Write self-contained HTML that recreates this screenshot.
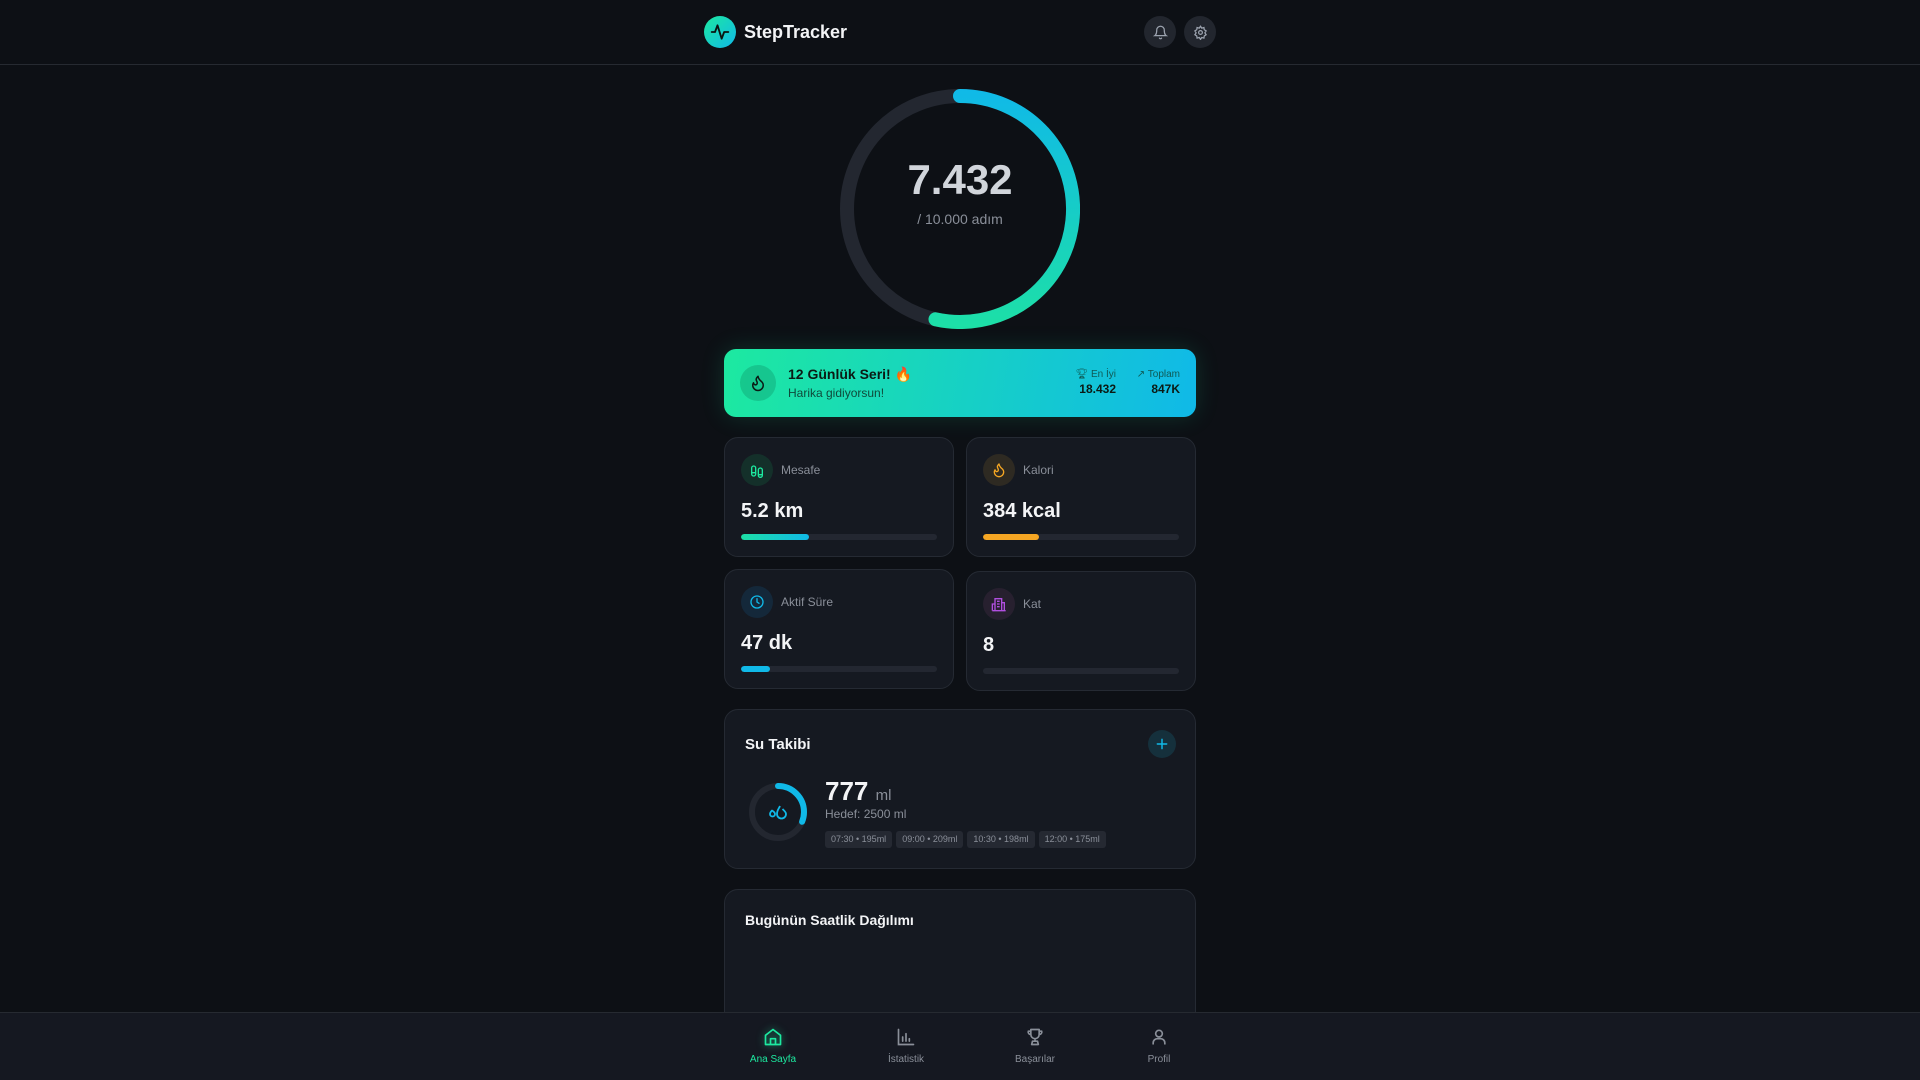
<!DOCTYPE html>
<html style="overflow:hidden;height:1080px"><head><meta charset="utf-8"><style>
*{margin:0;padding:0;box-sizing:border-box}
body{width:1920px;height:1080px;background:#0d1015;font-family:"Liberation Sans",sans-serif;position:relative;overflow:hidden;color:#f3f4f6}
.abs{position:absolute}
.hdr{left:0;top:0;width:1920px;height:65px;border-bottom:1px solid #262a31}
.card{position:absolute;background:#151921;border:1px solid #252a33;border-radius:14px}
.ic{position:absolute;width:32px;height:32px;border-radius:50%;display:flex;align-items:center;justify-content:center}
.lbl{position:absolute;font-size:12px;color:#8a8f99}
.val{position:absolute;font-size:20px;font-weight:bold;color:#f3f4f6}
.bar{position:absolute;left:16px;width:196px;height:6px;border-radius:3px;background:#232731;overflow:hidden}
.bar i{display:block;height:6px;border-radius:3px}
.chip{display:inline-block;height:17px;line-height:17px;padding:0 6px;margin-right:4px;background:#252932;border-radius:3px;font-size:9px;color:#8a8f99}
.nav{left:0;top:1012px;width:1920px;height:68px;background:#151821;border-top:1px solid #262a31}
.ni{position:absolute;top:14px;width:80px;margin-left:-40px;text-align:center;font-size:10px;color:#8a8f99}
.ni svg{display:block;margin:0 auto 7px}
</style></head><body>
<div class="abs hdr">
  <div class="abs" style="left:704px;top:16px;width:32px;height:32px;border-radius:50%;background:linear-gradient(135deg,#1de9a0,#10b9e8);display:flex;align-items:center;justify-content:center">
    <svg width="20" height="20" viewBox="0 0 24 24" fill="none" stroke="#0b1410" stroke-width="2.2" stroke-linecap="round" stroke-linejoin="round"><path d="M2 12h4l3-8 5 16 3-8h5"/></svg>
  </div>
  <div class="abs" style="left:744px;top:22px;font-size:18px;font-weight:bold;color:#f3f4f6">StepTracker</div>
  <div class="abs" style="left:1144px;top:16px;width:32px;height:32px;border-radius:50%;background:#22262e;display:flex;align-items:center;justify-content:center">
    <svg width="15" height="15" viewBox="0 0 24 24" fill="none" stroke="#9ca3af" stroke-width="2" stroke-linecap="round"><path d="M6 8a6 6 0 0 1 12 0c0 7 3 9 3 9H3s3-2 3-9"/><path d="M10.3 21a1.9 1.9 0 0 0 3.4 0"/></svg>
  </div>
  <div class="abs" style="left:1184px;top:16px;width:32px;height:32px;border-radius:50%;background:#22262e;display:flex;align-items:center;justify-content:center">
    <svg width="15" height="15" viewBox="0 0 24 24" fill="none" stroke="#9ca3af" stroke-width="2"><circle cx="12" cy="12" r="3"/><path d="M12 2l2 3 3.5-1 .5 3.5 3 2-2 3 2 3-3 2-.5 3.5-3.5-1-2 3-2-3-3.5 1-.5-3.5-3-2 2-3-2-3 3-2 .5-3.5 3.5 1z"/></svg>
  </div>
</div>

<svg class="abs" style="left:840px;top:89px" width="240" height="240" viewBox="0 0 240 240">
  <defs><linearGradient id="g1" gradientUnits="userSpaceOnUse" x1="0" y1="0" x2="0" y2="240"><stop offset="0" stop-color="#10b9e8"/><stop offset="1" stop-color="#1de0a6"/></linearGradient></defs>
  <circle cx="120" cy="120" r="113" fill="none" stroke="#232730" stroke-width="14"/>
  <path d="M120 7 A113 113 0 1 1 95.5 230.3" fill="none" stroke="url(#g1)" stroke-width="14" stroke-linecap="round"/>
</svg>
<div class="abs" style="left:840px;top:156px;width:240px;text-align:center;font-size:42px;font-weight:bold;color:#d1d5db">7.432</div>
<div class="abs" style="left:840px;top:211px;width:240px;text-align:center;font-size:14px;color:#8a8f99">/ 10.000 adım</div>

<div class="abs" style="left:724px;top:349px;width:472px;height:68px;border-radius:12px;background:linear-gradient(100deg,#1de9a0,#10b9e8);box-shadow:0 0 24px rgba(29,233,160,0.15)">
  <div class="abs" style="left:16px;top:16px;width:36px;height:36px;border-radius:50%;background:rgba(0,60,40,0.18);display:flex;align-items:center;justify-content:center">
    <svg width="18" height="18" viewBox="0 0 24 24" fill="none" stroke="#0b1a14" stroke-width="2" stroke-linecap="round" stroke-linejoin="round"><path d="M8.5 14.5A2.5 2.5 0 0 0 11 12c0-1.4-.5-2-1-3-1.1-2.1-.2-4 2-6 .5 2.5 2 4.9 4 6.5 2 1.6 3 3.5 3 5.5a7 7 0 1 1-14 0c0-1.2.4-2.3 1-3.3.3 1.4 1.5 2.8 2.5 2.8z"/></svg>
  </div>
  <div class="abs" style="left:64px;top:17px;font-size:14px;font-weight:bold;color:#0b1a14">12 Günlük Seri! 🔥</div>
  <div class="abs" style="left:64px;top:37px;font-size:12px;color:#0f4a3a">Harika gidiyorsun!</div>
  <div class="abs" style="right:80px;top:20px;font-size:10px;color:#0f5a55;text-align:right">🏆︎ En İyi<br><b style="font-size:12px;color:#0b1a14;line-height:18px">18.432</b></div>
  <div class="abs" style="right:16px;top:20px;font-size:10px;color:#0f5a55;text-align:right">↗ Toplam<br><b style="font-size:12px;color:#0b1a14;line-height:18px">847K</b></div>
</div>

<div class="card" style="left:724px;top:437px;width:230px;height:120px">
  <div class="ic" style="left:16px;top:16px;background:#14302a"><svg width="16" height="16" viewBox="0 0 24 24" fill="none" stroke="#1de9a0" stroke-width="2"><path d="M4 16V9a3 3 0 0 1 6 0v7zM4 16v2a3 3 0 0 0 6 0v-2M14 19v-7a3 3 0 0 1 6 0v7zM14 19v1a3 3 0 0 0 6 0v-1"/></svg></div>
  <div class="lbl" style="left:56px;top:25px">Mesafe</div>
  <div class="val" style="left:16px;top:62px">5.2 km</div>
  <div class="bar" style="top:96px"><i style="width:68px;background:linear-gradient(90deg,#1de0a6,#10b9e8)"></i></div>
</div>
<div class="card" style="left:966px;top:437px;width:230px;height:120px">
  <div class="ic" style="left:16px;top:16px;background:#2e2a22"><svg width="16" height="16" viewBox="0 0 24 24" fill="none" stroke="#f5a623" stroke-width="2" stroke-linejoin="round"><path d="M8.5 14.5A2.5 2.5 0 0 0 11 12c0-1.4-.5-2-1-3-1.1-2.1-.2-4 2-6 .5 2.5 2 4.9 4 6.5 2 1.6 3 3.5 3 5.5a7 7 0 1 1-14 0c0-1.2.4-2.3 1-3.3.3 1.4 1.5 2.8 2.5 2.8z"/></svg></div>
  <div class="lbl" style="left:56px;top:25px">Kalori</div>
  <div class="val" style="left:16px;top:62px">384 kcal</div>
  <div class="bar" style="top:96px"><i style="width:56px;background:#f5a623"></i></div>
</div>
<div class="card" style="left:724px;top:569px;width:230px;height:120px">
  <div class="ic" style="left:16px;top:16px;background:#14283a"><svg width="16" height="16" viewBox="0 0 24 24" fill="none" stroke="#10b9e8" stroke-width="2" stroke-linecap="round"><circle cx="12" cy="12" r="9"/><path d="M12 7v5l3 2"/></svg></div>
  <div class="lbl" style="left:56px;top:25px">Aktif Süre</div>
  <div class="val" style="left:16px;top:62px">47 dk</div>
  <div class="bar" style="top:96px"><i style="width:29px;background:#10b9e8"></i></div>
</div>
<div class="card" style="left:966px;top:571px;width:230px;height:120px">
  <div class="ic" style="left:16px;top:16px;background:#27202f"><svg width="16" height="16" viewBox="0 0 24 24" fill="none" stroke="#b14fe0" stroke-width="2"><path d="M6 22V4h10v18zM2 22V12h4M16 10h4v12M2 22h20M9 8h4M9 12h4M9 16h4"/></svg></div>
  <div class="lbl" style="left:56px;top:25px">Kat</div>
  <div class="val" style="left:16px;top:62px">8</div>
  <div class="bar" style="top:96px"></div>
</div>

<div class="card" style="left:724px;top:709px;width:472px;height:160px">
  <div class="abs" style="left:20px;top:26px;font-size:15px;font-weight:bold">Su Takibi</div>
  <div class="abs" style="left:423px;top:20px;width:28px;height:28px;border-radius:50%;background:#15303c;display:flex;align-items:center;justify-content:center"><svg width="14" height="14" viewBox="0 0 24 24" stroke="#10b9e8" stroke-width="2.5" stroke-linecap="round"><path d="M12 4v16M4 12h16"/></svg></div>
  <svg class="abs" style="left:23px;top:72px" width="60" height="60" viewBox="0 0 60 60">
    <circle cx="30" cy="30" r="26" fill="none" stroke="#232730" stroke-width="6"/>
    <circle cx="30" cy="30" r="26" fill="none" stroke="#10b9e8" stroke-width="6" stroke-linecap="round" stroke-dasharray="50.8 200" transform="rotate(-90 30 30)"/>
    <g transform="translate(20 20)" fill="none" stroke="#10b9e8" stroke-width="1.8" stroke-linejoin="round"><path d="M4 8.5c-1.5 1.5-2 2.5-2 3.5a2.5 2.5 0 0 0 5 0c0-1-.5-2-3-3.5z"/><path d="M12 4c-1 2.5-3 4-3 8a4.5 4.5 0 0 0 9 0c0-2-2-3.5-3.5-5"/></g>
  </svg>
  <div class="abs" style="left:100px;top:66px;font-size:26px;font-weight:bold">777 <span style="font-size:15px;font-weight:normal;color:#8a8f99">ml</span></div>
  <div class="abs" style="left:100px;top:97px;font-size:12px;color:#8a8f99">Hedef: 2500 ml</div>
  <div class="abs" style="left:100px;top:119px;white-space:nowrap"><span class="chip">07:30 • 195ml</span><span class="chip">09:00 • 209ml</span><span class="chip">10:30 • 198ml</span><span class="chip">12:00 • 175ml</span></div>
</div>

<div class="card" style="left:724px;top:889px;width:472px;height:191px">
  <div class="abs" style="left:20px;top:22px;font-size:14px;font-weight:bold">Bugünün Saatlik Dağılımı</div>
</div>

<div class="abs nav">
  <div class="ni" style="left:773px;color:#1de9a0"><svg width="20" height="20" viewBox="0 0 24 24" fill="none" stroke="#1de9a0" stroke-width="2" stroke-linejoin="round" style="filter:drop-shadow(0 0 4px rgba(29,233,160,.6))"><path d="M3 10l9-7 9 7v11H3z"/><path d="M9 21v-7h6v7"/></svg>Ana Sayfa</div>
  <div class="ni" style="left:906px"><svg width="20" height="20" viewBox="0 0 24 24" fill="none" stroke="#8a8f99" stroke-width="2" stroke-linecap="round"><path d="M3 3v18h18M8 17v-5M12 17V8M16 17v-3"/></svg>İstatistik</div>
  <div class="ni" style="left:1035px"><svg width="20" height="20" viewBox="0 0 24 24" fill="none" stroke="#8a8f99" stroke-width="2" stroke-linejoin="round"><path d="M7 3h10v6a5 5 0 0 1-10 0zM7 5H4a3 3 0 0 0 3 4M17 5h3a3 3 0 0 1-3 4M12 14v3M8 21l1-4h6l1 4z"/></svg>Başarılar</div>
  <div class="ni" style="left:1159px"><svg width="20" height="20" viewBox="0 0 24 24" fill="none" stroke="#8a8f99" stroke-width="2"><circle cx="12" cy="8" r="4"/><path d="M5 21v-2a5 5 0 0 1 5-5h4a5 5 0 0 1 5 5v2"/></svg>Profil</div>
</div>
</body></html>
